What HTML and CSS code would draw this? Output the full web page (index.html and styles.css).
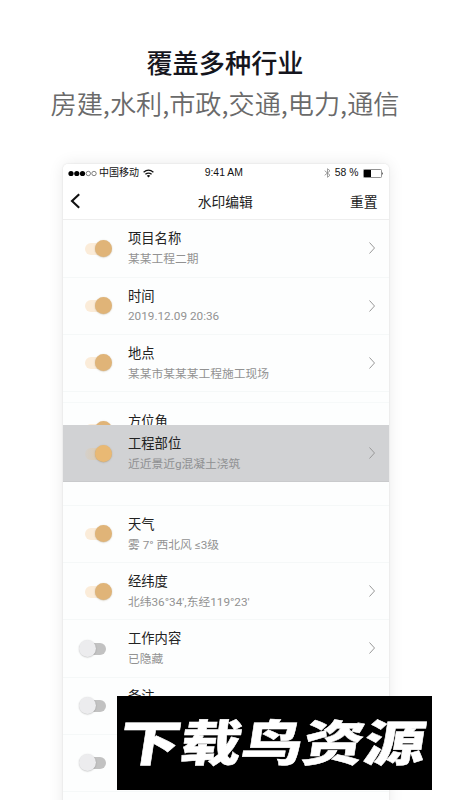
FILE: index.html
```
<!DOCTYPE html>
<html lang="zh-CN">
<head>
<meta charset="utf-8">
<title>水印编辑</title>
<link rel="stylesheet" href="styles.css">
</head>
<body>
<svg width="0" height="0" class="defs"><symbol id="chev" viewBox="0 0 8 14"><path d="M1.5 1.5 6.5 7l-5 5.5" fill="none" stroke="currentColor" stroke-width="1"/></symbol></svg>
<header class="promo">
  <h1>覆盖多种行业</h1>
  <p>房建,水利,市政,交通,电力,通信</p>
</header>
<main class="phone">
  <div class="status">
    <div class="carrier">
      <svg width="29" height="7" viewBox="0 0 29 7"><g fill="#000"><circle cx="3" cy="3.5" r="2.6"/><circle cx="8.8" cy="3.5" r="2.6"/><circle cx="14.5" cy="3.5" r="2.6"/></g><g fill="none" stroke="#333" stroke-width=".6"><circle cx="20.3" cy="3.5" r="2.2"/><circle cx="26" cy="3.5" r="2.2"/></g></svg>
      <span>中国移动</span>
      <svg width="11" height="9" viewBox="0 0 11 9"><g fill="none" stroke="#111" stroke-width="1.3"><path d="M.6 3.2Q5.5-1 10.4 3.2"/><path d="M2.4 5.3q3.1-2.5 6.2 0"/></g><path d="M3.8 6.7q1.7-1.3 3.4 0L5.5 8.6z" fill="#111"/></svg>
    </div>
    <span class="time">9:41 AM</span>
    <div class="power">
      <svg width="7" height="10" viewBox="0 0 7 10"><path d="M.7 2.7 6 7.2 3.5 9.3V.7L6 2.8.7 7.3" fill="none" stroke="#888" stroke-width=".8"/></svg>
      <span>58 %</span>
      <svg width="21" height="9" viewBox="0 0 21 9"><rect x=".5" y=".5" width="18" height="8" rx=".8" fill="#fff" stroke="#777" stroke-width=".8"/><path d="M1 1h7v7H1z"/><path d="M19.2 3q1.4 1.5 0 3z" fill="#111"/></svg>
    </div>
  </div>
  <nav class="bar">
    <svg width="11" height="16" viewBox="0 0 11 16"><path d="M9.2 1.2 2 8l7.2 6.8" fill="none" stroke="#111" stroke-width="2.1"/></svg>
    <b>水印编辑</b>
    <span>重置</span>
  </nav>
  <section class="row"><i class="toggle on"></i><div class="text"><h2>项目名称</h2><p>某某工程二期</p></div><svg class="go"><use href="#chev"/></svg></section>
  <section class="row"><i class="toggle on"></i><div class="text"><h2>时间</h2><p class="latin">2019.12.09 20:36</p></div><svg class="go"><use href="#chev"/></svg></section>
  <section class="row"><i class="toggle on"></i><div class="text"><h2>地点</h2><p>某某市某某某工程施工现场</p></div><svg class="go"><use href="#chev"/></svg></section>
  <div class="gap"></div>
  <div class="covered"><section class="row"><i class="toggle on"></i><div class="text"><h2>方位角</h2></div></section></div>
  <section class="row dragged"><i class="toggle on"></i><div class="text"><h2>工程部位</h2><p>近近景近g混凝土浇筑</p></div><svg class="go"><use href="#chev"/></svg></section>
  <div class="gap after"></div>
  <section class="row"><i class="toggle on"></i><div class="text"><h2>天气</h2><p>雾 7° 西北风 ≤3级</p></div></section>
  <section class="row"><i class="toggle on"></i><div class="text"><h2>经纬度</h2><p>北纬36°34',东经119°23'</p></div><svg class="go"><use href="#chev"/></svg></section>
  <section class="row"><i class="toggle"></i><div class="text"><h2>工作内容</h2><p>已隐藏</p></div><svg class="go"><use href="#chev"/></svg></section>
  <section class="row"><i class="toggle"></i><div class="text"><h2>备注</h2></div></section>
  <section class="row"><i class="toggle"></i></section>
</main>
<aside class="stamp"><span>下载鸟资源</span></aside>
</body>
</html>
```
FILE: styles.css
```
* { box-sizing: border-box; margin: 0; padding: 0; }
body {
  position: relative;
  width: 450px;
  height: 800px;
  overflow: hidden;
  background: #fff;
  font-family: Roboto, "Noto Sans CJK SC", sans-serif;
}
.defs { position: absolute; }
.promo {
  height: 164px;
  padding-top: 42px;
  text-align: center;
  font-family: "Noto Sans CJK SC", sans-serif;
}
.promo h1 { font-size: 26.2px; line-height: 40px; font-weight: 500; color: #15151d; }
.promo p { font-size: 26.15px; line-height: 42px; font-weight: 350; color: #6a6a6a; }
.phone {
  width: 325.5px;
  height: 660px;
  margin-left: 63px;
  background: #fdfefe;
  border-radius: 5px;
  box-shadow: 0 0 2px rgba(0,0,0,.13), 0 0 16px rgba(0,0,0,.09);
}
.status {
  display: grid;
  grid-template-columns: 1fr auto 1fr;
  align-items: center;
  height: 18px;
  padding: 0 5px;
  background: #fff;
  border-radius: 5px 5px 0 0;
  font: 10px/18px "Liberation Sans", "Noto Sans CJK SC", sans-serif;
  color: #111;
}
.time { padding-right: 4px; font-size: 10.4px; }
.carrier, .power { display: flex; align-items: center; gap: 4px; }
.carrier { gap: 2px; }
.carrier svg:last-child { margin-left: 2px; }
.power { justify-content: flex-end; }
.power span { font-size: 10.4px; }
.bar {
  display: grid;
  grid-template-columns: 1fr auto 1fr;
  align-items: center;
  height: 38.3px;
  padding: 1px 11px 0 7px;
  background: #fff;
  border-bottom: 1px solid #eee;
  font-size: 13.8px;
  color: #222;
}
.bar b { padding-left: 3px; font-weight: 400; }
.bar span { text-align: right; }
.row {
  display: flex;
  align-items: center;
  height: 57.25px;
  padding: 0 13px 0 16px;
  border-bottom: 1px solid #f5f8f8;
}
.text { flex: 1; align-self: flex-start; margin-left: 20px; padding-top: 9px; }
.text h2 { font-size: 13.3px; line-height: 20px; font-weight: 400; color: #222; }
.text p { font-size: 11.75px; line-height: 20px; color: #929292; white-space: nowrap; }
.text .latin { margin-top: -1px; }
.go { width: 8px; height: 14px; color: #999; }
.toggle {
  position: relative;
  width: 29px;
  height: 19px;
}
.toggle::before {
  content: "";
  position: absolute;
  left: 6px;
  top: 4px;
  width: 21px;
  height: 12px;
  border-radius: 6px;
  background: #c2c2c2;
}
.toggle::after {
  content: "";
  position: absolute;
  left: 0;
  top: 1px;
  width: 17px;
  height: 17px;
  border-radius: 50%;
  background: #ececee;
  box-shadow: 0 .5px 1.5px rgba(0,0,0,.25);
}
.toggle.on::before { background: #fbecd9; }
.toggle.on::after { left: 16px; background: #e0b478; box-shadow: 0 .5px 1.5px rgba(120,90,40,.4); }
.gap { height: 11px; border-bottom: 1px solid #f6f9f9; }
.gap.after { height: 23.5px; border-color: #f5f8f8; }
.covered { height: 22px; overflow: hidden; }
.covered .toggle { top: -2px; }
.dragged { background: #d1d2d4; border-color: #c9cacc; }
.dragged .toggle.on::before { background: linear-gradient(90deg, #d4d0cb, #e2c9a3); }
.dragged .toggle.on::after { background: #e9b974; }
.dragged .text p { color: #8f9092; }
.stamp {
  position: absolute;
  left: 117px;
  top: 696px;
  width: 315px;
  height: 94px;
  display: flex;
  align-items: center;
  justify-content: center;
  background: #000;
  color: #fff;
}
.stamp span {
  font: 900 49px/94px "Noto Sans CJK SC", sans-serif;
  white-space: nowrap;
  -webkit-text-stroke: .5px #fff;
  transform: translate(-1.5px, -3px) scaleX(1.25) skewX(-7deg);
}
```
